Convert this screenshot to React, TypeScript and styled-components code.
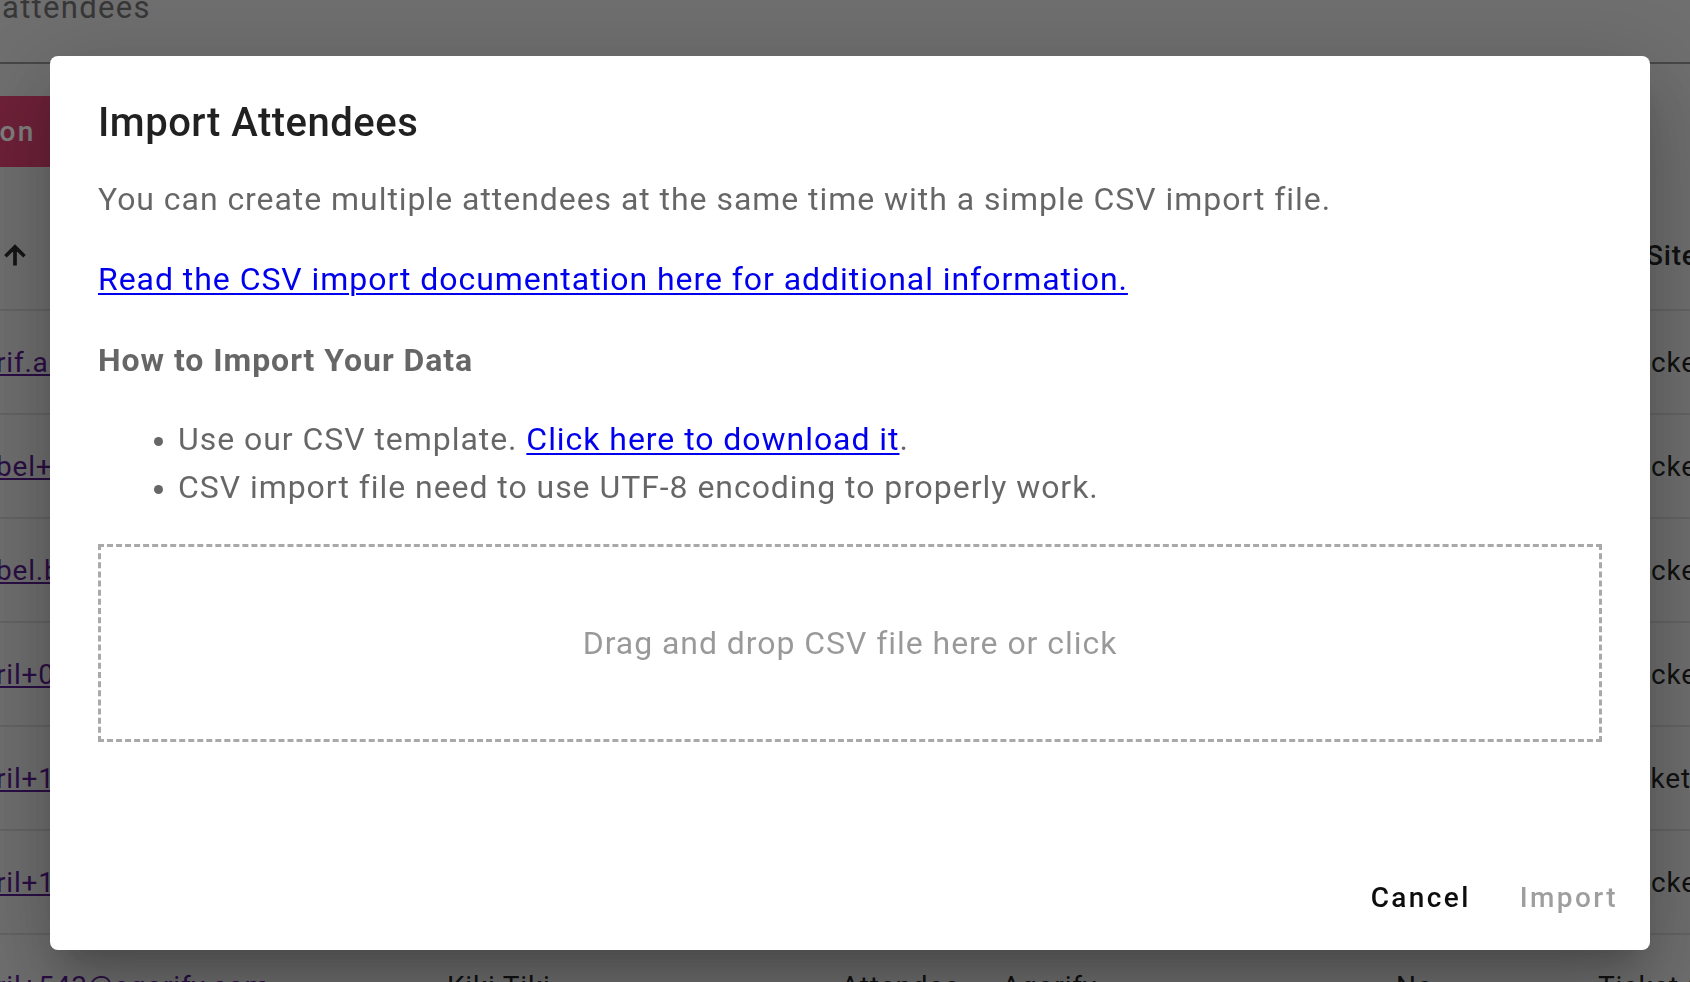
import React from "react";
import styled, { createGlobalStyle } from "styled-components";

const GlobalStyle = createGlobalStyle`
  html, body {
    margin: 0;
    padding: 0;
    width: 1690px;
    height: 982px;
    overflow: hidden;
    font-family: Roboto, "Liberation Sans", Arial, sans-serif;
  }
  * { box-sizing: border-box; }
`;

/* ---------- background page ---------- */

const Page = styled.div`
  width: 1690px;
  height: 982px;
  overflow: hidden;
  background: #dedede;
  font-family: Roboto, "Liberation Sans", Arial, sans-serif;
`;

const PageHeader = styled.header`
  height: 64px;
  border-bottom: 2px solid #8e8e8e;
  overflow: hidden;
`;

const PageTitle = styled.h1`
  margin: -12px 0 0 2px;
  font-size: 31px;
  line-height: 40px;
  font-weight: 400;
  letter-spacing: 1.3px;
  color: #6e6e6e;
`;

const Toolbar = styled.div`
  height: 143px;
  padding-top: 32px;
  display: flex;
  overflow: hidden;
`;

const RedButton = styled.button`
  height: 71px;
  margin-left: -245px;
  padding: 0 32px;
  border: none;
  border-radius: 8px;
  background: #dc4270;
  color: #ffffff;
  font-family: inherit;
  font-size: 28px;
  font-weight: 500;
  letter-spacing: 2.5px;
  white-space: nowrap;
`;

const Table = styled.div`
  margin-left: -4px;
  display: flex;
  flex-direction: column;
`;

const Row = styled.div`
  display: grid;
  grid-template-columns: 451px 394px 161px 394px 230px 200px;
  height: 104px;
  border-bottom: 2px solid #c8c8c8;
  align-items: center;
  font-size: 28px;
  letter-spacing: 0.8px;
  color: rgba(0, 0, 0, 0.87);
  white-space: nowrap;
`;

const HeaderCell = styled.div<{ $indent?: number }>`
  font-weight: 500;
  padding-left: ${(p) => p.$indent ?? 0}px;
  display: flex;
  align-items: center;
  margin-top: -6px;
  color: rgba(0, 0, 0, 0.87);
`;

const Cell = styled.div<{ $shift?: number }>`
  overflow: visible;
  text-indent: ${(p) => p.$shift ?? 0}px;
`;

const MailLink = styled.a`
  color: #551a8b;
  text-decoration: underline;
`;

const SortIcon = () => (
  <svg width="30" height="30" viewBox="0 0 24 24" style={{ marginLeft: 4 }}>
    <path
      fill="#2a2a2a"
      stroke="#2a2a2a"
      strokeWidth="0.9"
      d="M4 12l1.41 1.41L11 7.83V20h2V7.83l5.58 5.59L20 12l-8-8-8 8z"
    />
  </svg>
);

const rows = [
  { mail: "rif.adam@agorify.com", name: "Amine Cherif", ticket: "Ticket", shift: 0 },
  { mail: "bel+12@agorify.com", name: "Abel One", ticket: "Ticket", shift: 0 },
  { mail: "bel.b@agorify.com", name: "Abel B", ticket: "Ticket", shift: 0 },
  { mail: "ril+09@agorify.com", name: "April Test", ticket: "Ticket", shift: 0 },
  { mail: "ril+15@agorify.com", name: "April Test", ticket: "Ticket (VIP)", shift: -16 },
  { mail: "ril+16@agorify.com", name: "April Test", ticket: "Ticket", shift: 0 },
  { mail: "ril+543@agorify.com", name: "Kiki Tiki", ticket: "Ticket (1)", shift: -28 },
];

/* ---------- dialog ---------- */

const Backdrop = styled.div`
  position: fixed;
  inset: 0;
  background: rgba(0, 0, 0, 0.5);
  padding: 56px 40px 32px 50px;
  display: flex;
`;

const Dialog = styled.div`
  flex: 1;
  background: #ffffff;
  border-radius: 8px;
  display: flex;
  flex-direction: column;
  box-shadow: 0 22px 30px -14px rgba(0, 0, 0, 0.2),
    0 48px 76px 6px rgba(0, 0, 0, 0.14), 0 18px 92px 16px rgba(0, 0, 0, 0.12);
`;

const Title = styled.h2`
  margin: 0;
  padding: 35px 48px 20px;
  font-size: 40px;
  line-height: 64px;
  font-weight: 500;
  letter-spacing: 0.5px;
  color: rgba(0, 0, 0, 0.87);
`;

const Content = styled.div`
  padding: 0 48px;
  display: flex;
  flex-direction: column;
`;

const Text = styled.p<{ $gap?: number }>`
  margin: 0 0 ${(p) => p.$gap ?? 0}px;
  font-size: 32px;
  line-height: 48px;
  letter-spacing: 0.95px;
  color: rgba(0, 0, 0, 0.6);
`;

const Link = styled.a`
  color: #0000ee;
  text-decoration: underline;
  text-underline-offset: 3px;
  text-decoration-thickness: 2px;
`;

const Heading = styled.h3`
  margin: 0 0 31px;
  font-size: 32px;
  line-height: 48px;
  font-weight: 700;
  letter-spacing: 0.95px;
  color: rgba(0, 0, 0, 0.6);
`;

const List = styled.ul`
  margin: 0 0 33px;
  padding-left: 80px;
`;

const Item = styled.li`
  font-size: 32px;
  line-height: 48px;
  letter-spacing: 0.95px;
  color: rgba(0, 0, 0, 0.6);
  &::marker {
    font-size: 28px;
  }
`;

const Dropzone = styled.div`
  height: 198px;
  border: 3px dashed #a9a9a9;
  display: flex;
  align-items: center;
  justify-content: center;
  font-size: 32px;
  letter-spacing: 0.95px;
  color: rgba(0, 0, 0, 0.4);
  cursor: pointer;
`;

const Actions = styled.div`
  margin-top: auto;
  padding: 16px;
  display: flex;
  justify-content: flex-end;
  gap: 17px;
`;

const ActionButton = styled.button<{ $disabled?: boolean }>`
  min-width: 128px;
  padding: 12px 16px;
  border: none;
  background: transparent;
  font-family: inherit;
  font-size: 28px;
  line-height: 49px;
  font-weight: 500;
  letter-spacing: 2.4px;
  color: ${(p) => (p.$disabled ? "rgba(0,0,0,0.38)" : "#0d0d0d")};
  cursor: ${(p) => (p.$disabled ? "default" : "pointer")};
`;

export default function App() {
  return (
    <>
      <GlobalStyle />
      <Page>
        <PageHeader>
          <PageTitle>attendees</PageTitle>
        </PageHeader>
        <Toolbar>
          <RedButton>Add Registration</RedButton>
        </Toolbar>
        <Table>
          <Row>
            <HeaderCell>
              <SortIcon />
            </HeaderCell>
            <HeaderCell>Name</HeaderCell>
            <HeaderCell>Role</HeaderCell>
            <HeaderCell>Company</HeaderCell>
            <HeaderCell>Checked</HeaderCell>
            <HeaderCell $indent={20}>Site</HeaderCell>
          </Row>
          {rows.map((r, i) => (
            <Row key={i}>
              <Cell>
                <MailLink href="#">{r.mail}</MailLink>
              </Cell>
              <Cell>{r.name}</Cell>
              <Cell>Attendee</Cell>
              <Cell>Agorify</Cell>
              <Cell>No</Cell>
              <Cell $shift={r.shift}>{r.ticket}</Cell>
            </Row>
          ))}
        </Table>
      </Page>

      <Backdrop>
        <Dialog role="dialog">
          <Title>Import Attendees</Title>
          <Content>
            <Text $gap={32}>
              You can create multiple attendees at the same time with a simple CSV import file.
            </Text>
            <Text $gap={33}>
              <Link href="#">Read the CSV import documentation here for additional information.</Link>
            </Text>
            <Heading>How to Import Your Data</Heading>
            <List>
              <Item>
                Use our CSV template. <Link href="#">Click here to download it</Link>.
              </Item>
              <Item>CSV import file need to use UTF-8 encoding to properly work.</Item>
            </List>
            <Dropzone>Drag and drop CSV file here or click</Dropzone>
          </Content>
          <Actions>
            <ActionButton>Cancel</ActionButton>
            <ActionButton $disabled disabled>
              Import
            </ActionButton>
          </Actions>
        </Dialog>
      </Backdrop>
    </>
  );
}
